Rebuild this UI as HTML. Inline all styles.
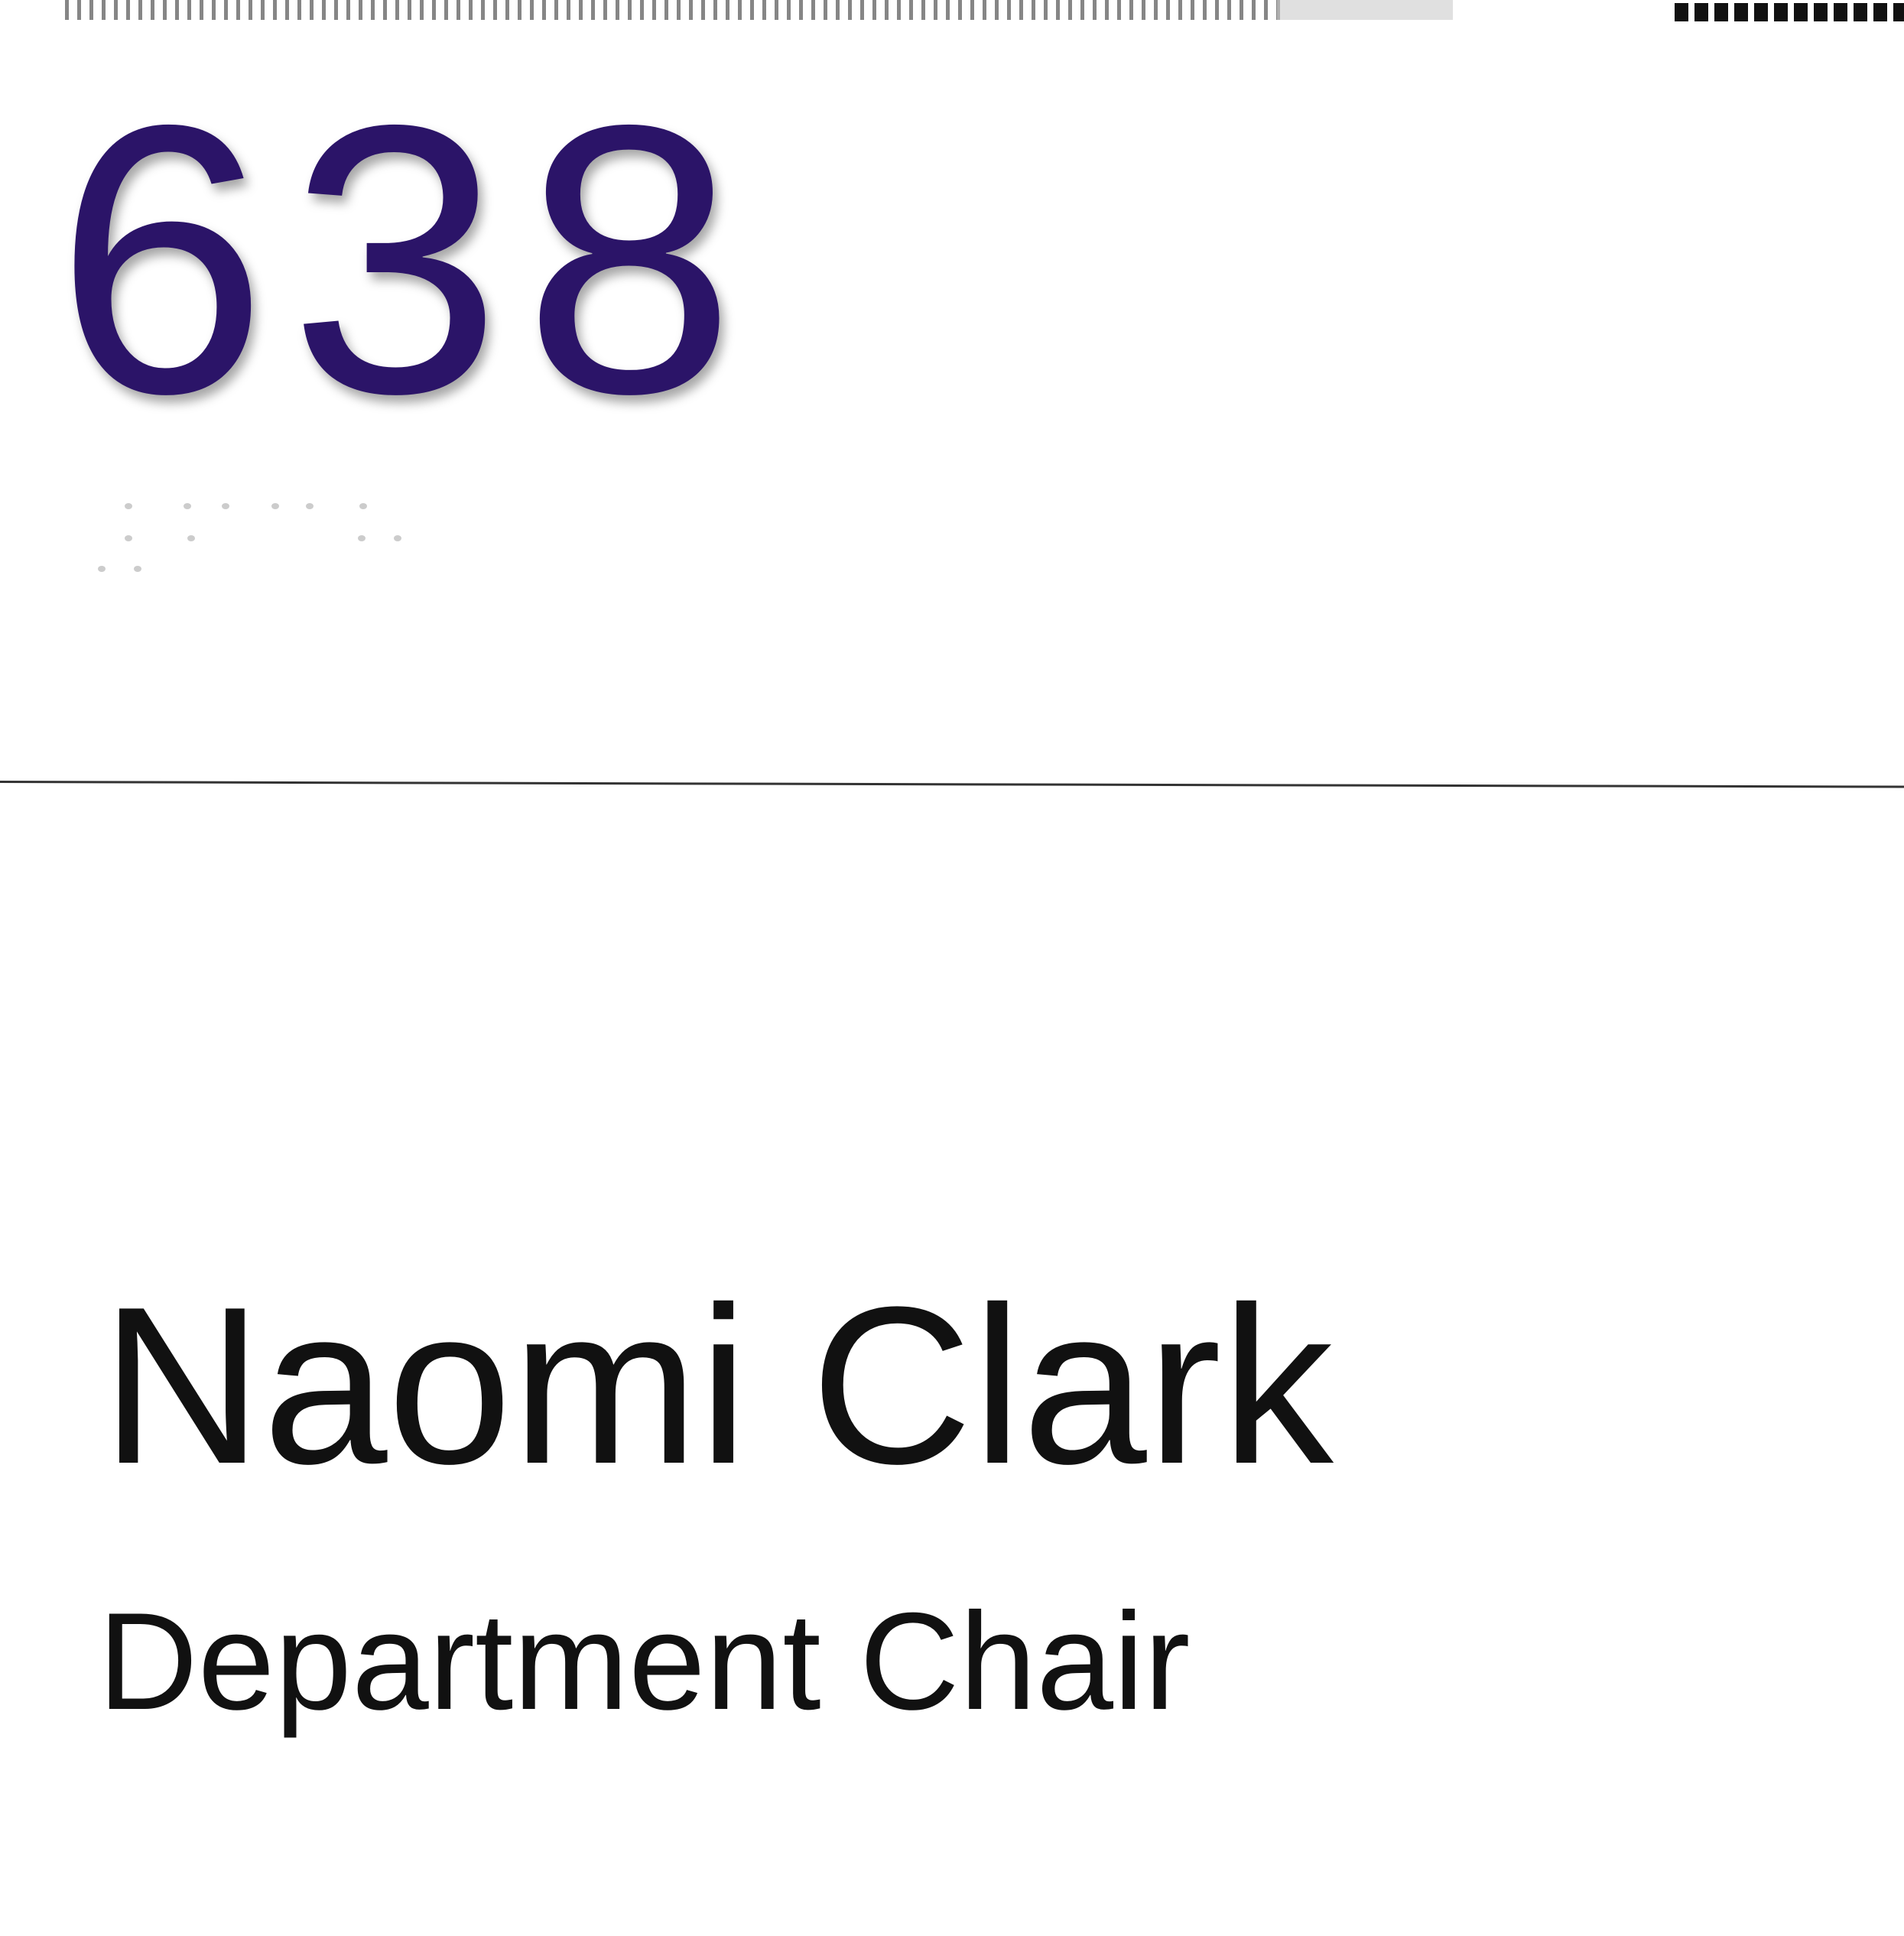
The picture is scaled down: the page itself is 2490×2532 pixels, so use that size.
<!DOCTYPE html>
<html><head><meta charset="utf-8"><style>
html,body{margin:0;padding:0;background:#fff;}
body{width:2490px;height:2532px;position:relative;overflow:hidden;font-family:"Liberation Sans",sans-serif;}
.strip{position:absolute;left:85px;top:0;height:26px;width:1590px;
 background:repeating-linear-gradient(90deg,#222 0 5px,#fff 5px 16px);opacity:.55;}
.strip2{position:absolute;left:1670px;top:0;height:26px;width:230px;background:#ccc;opacity:.6}
.strip3{position:absolute;left:2190px;top:4px;height:24px;width:300px;
 background:repeating-linear-gradient(90deg,#111 0 18px,#fff 18px 26px);}
.num{position:absolute;left:72px;top:89px;font-size:500px;line-height:1;color:#2b1468;letter-spacing:28px;
 text-shadow:6px 10px 14px rgba(0,0,0,.35);}
.line{position:absolute;left:0;top:1021px;width:2490px;height:3px;background:#333;transform:rotate(0.15deg);transform-origin:0 0;}
.name{position:absolute;left:132px;top:1666px;font-size:293px;line-height:1;color:#111;white-space:nowrap;}
.title{position:absolute;left:128px;top:2083px;font-size:181px;line-height:1;color:#111;white-space:nowrap;}
.dot{position:absolute;width:10px;height:8px;background:#ccc;border-radius:50%;}
</style></head><body>
<div class="strip"></div><div class="strip2"></div><div class="strip3"></div>
<div class="num">638</div>
<div class="dot" style="left:163px;top:658px"></div>
<div class="dot" style="left:240px;top:658px"></div><div class="dot" style="left:290px;top:658px"></div>
<div class="dot" style="left:355px;top:658px"></div><div class="dot" style="left:400px;top:658px"></div>
<div class="dot" style="left:470px;top:658px"></div>
<div class="dot" style="left:163px;top:700px"></div><div class="dot" style="left:245px;top:700px"></div>
<div class="dot" style="left:468px;top:700px"></div><div class="dot" style="left:515px;top:700px"></div>
<div class="dot" style="left:128px;top:740px"></div><div class="dot" style="left:175px;top:740px"></div>
<div class="line"></div>
<div class="name">Naomi Clark</div>
<div class="title">Department Chair</div>
</body></html>
